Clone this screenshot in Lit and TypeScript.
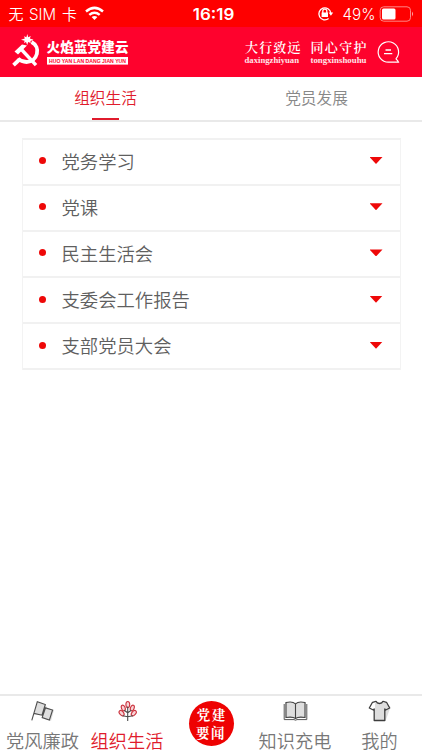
import { LitElement, html, css, svg } from "lit";
import { customElement, property } from "lit/decorators.js";

const flag = svg`<path d="M7.5 2.5 L15.8 4.8 L17 8 L24 10 L21 21 L13 18 L12 15 L4 13.8Z" fill="#dedede"/>
  <path d="M1.8 20.3 L7.3 1.8 L15.3 4.5 L12 15.2 L3.7 13.4 M14.5 7.6 L15.5 7.9 L22.6 10 L19.4 20 L12.2 17.6 L15.5 7.9" fill="none" stroke="#4d4d4d" stroke-width="1.1"/>`;

const plant = svg`<g fill="#f8d5d8" stroke="#cc3540" stroke-width="1.1">
  <ellipse cx="12.8" cy="4.6" rx="1.9" ry="3.1"/>
  <ellipse cx="8.3" cy="8" rx="1.8" ry="3" transform="rotate(-22 8.3 8)"/>
  <ellipse cx="17.3" cy="8" rx="1.8" ry="3" transform="rotate(22 17.3 8)"/>
  <ellipse cx="6.6" cy="13.2" rx="1.9" ry="3.1" transform="rotate(-42 6.6 13.2)"/>
  <ellipse cx="18.8" cy="13.2" rx="1.9" ry="3.1" transform="rotate(42 18.8 13.2)"/></g>
  <path d="M12.7 6.5V21 M9.2 10.2 L12.7 12.8 L16.3 10.2 M7.5 15.8 L12.7 16.8 L18 15.8" stroke="#4d4d4d" stroke-width="1.1" fill="none"/>`;

const book = svg`<path d="M2 2.5H23V18H2Z" fill="#dedede"/>
  <path d="M12.5 4 C10.5 1.8 6 1.8 3 2.5 V17.5 C7 16.8 10.5 17 12.5 18.5 C14.5 17 18 16.8 22 17.5 V2.5 C19 1.8 14.5 1.8 12.5 4Z V18.5" fill="none" stroke="#444" stroke-width="1.1"/>
  <path d="M1.2 4V19.6H11L12.5 20.2L14 19.6H23.8V4" fill="none" stroke="#555" stroke-width="1"/>`;

const shirt = svg`<path d="M8 3 H19 L23.5 7 L18.5 21 H8Z" fill="#dedede"/>
  <path d="M9 1.3 C10.2 4.2 14.8 4.2 16 1.3 L19.5 2.3 L22.7 8 L18.7 10 L17.8 9 V20.5 H7.2 V9 L6.3 10 L2.3 8 L5.5 2.3Z" fill="none" stroke="#3d3d3d" stroke-width="1.3" stroke-linejoin="round"/>`;

@customElement("status-bar")
class StatusBar extends LitElement {
  static styles = css`
    :host { display: block; height: 27px; background: #fe0000; }
    svg { display: block; }
    text { fill: #fff; font-family: Inter, "Noto Sans CJK SC", sans-serif; font-size: 16px; }
    .zh { font-family: "Noto Sans CJK SC", sans-serif; font-size: 15px; font-weight: 350; }
    .time { font-weight: 600; font-size: 16px; }
  `;
  render() {
    return html`<svg width="422" height="27" viewBox="0 0 422 27">
      <text class="zh" x="8.5" y="19.5">无</text>
      <text x="29" y="19.8" textLength="27" lengthAdjust="spacingAndGlyphs">SIM</text>
      <text class="zh" x="62" y="19.5">卡</text>
      <g fill="none" stroke="#fff" stroke-width="2.5">
        <path d="M86 11.5 Q94.5 4.3 103 11.5"/><path d="M89.3 14.9 Q94.5 10.7 99.7 14.9"/>
      </g>
      <path d="M91.6 17.1 Q94.5 14.9 97.4 17.1 L94.5 20Z" fill="#fff"/>
      <text class="time" x="192.8" y="19.8" textLength="41.5" lengthAdjust="spacingAndGlyphs">16:19</text>
      <g fill="none" stroke="#fff" stroke-width="1.3">
        <path d="M328.6 18.6 A6 6 0 1 1 330.8 13"/>
        <path d="M322.8 13 V11.2 A2 2 0 0 1 326.8 11.2 V13"/>
      </g>
      <path d="M321.6 12.5H328V17H321.6Z M328.6 12.5H333.2L330.9 15.8Z" fill="#fff"/>
      <text x="342.5" y="19.6" textLength="33" lengthAdjust="spacingAndGlyphs">49%</text>
      <rect x="380.2" y="6.8" width="30.3" height="14.4" rx="3.5" fill="none" stroke="#ff8585" stroke-width="1"/>
      <rect x="382" y="8.6" width="13.5" height="10.8" rx="1.5" fill="#fff"/>
      <path d="M412 11.6 Q414.2 14 412 16.4Z" fill="#ff9c9c"/>
    </svg>`;
  }
}

@customElement("brand-bar")
class BrandBar extends LitElement {
  static styles = css`
    :host { display: block; height: 50px; background: #fe022d; }
    svg { display: block; }
    .name { font: 900 13.5px "Noto Sans CJK SC", sans-serif; fill: #fff; }
    .latin { font: 700 5.6px "Liberation Sans", sans-serif; fill: #fe022d; }
    .motto { font: 600 13px "Noto Serif CJK SC", "Noto Sans CJK SC", serif; fill: #fff; }
    .pinyin { font: 700 8px "Liberation Serif", serif; fill: #ffe3e8; }
  `;
  render() {
    return html`<svg width="422" height="50" viewBox="0 27 422 50">
      <g fill="none" stroke="#fff">
        <path d="M31.5 42 C41.5 47 37.5 62 26.5 62 C22.5 62 20 60.5 18 58.5" stroke-width="3.8"/>
        <path d="M19.5 59.5 L13.5 65.2" stroke-width="3.8"/>
        <path d="M20.5 48.5 L36 65.2" stroke-width="3.4"/>
      </g>
      <path d="M14.5 51.5 L22 44.5 L27 45.5 L18 54.5Z" fill="#fff"/>
      <path d="M27.3 34 L28.2 37.3 L30.8 36 L29.8 38.6 L33.5 39.8 L30.5 41 L30.6 43 L28.2 42 L27.2 45 L26 42 L24 43 L24.6 40.8 L21 39.8 L24.8 38.6 L24 36.2 L26.4 37.3Z" fill="#fff"/>
      <text class="name" x="46.5" y="52" textLength="82">火焰蓝党建云</text>
      <rect x="47" y="57" width="81" height="7.6" fill="#fff"/>
      <text class="latin" x="49" y="62.9" textLength="77" lengthAdjust="spacingAndGlyphs">HUO YAN LAN DANG JIAN YUN</text>
      <text class="motto" x="245" y="52.2" textLength="55.5">大行致远</text>
      <text class="motto" x="310.5" y="52.2" textLength="56">同心守护</text>
      <text class="pinyin" x="244.5" y="62.8" textLength="54.5" lengthAdjust="spacingAndGlyphs">daxingzhiyuan</text>
      <text class="pinyin" x="310.5" y="62.8" textLength="56" lengthAdjust="spacingAndGlyphs">tongxinshouhu</text>
      <path d="M395.8 59 A10.2 10.2 0 1 0 388.5 62.2 H398.5 Q397.8 60.2 395.8 59" fill="none" stroke="#fff" stroke-width="1.2"/>
      <path d="M385.5 50H391 M384 53.6H392.3" stroke="#fff" stroke-width="1.3"/>
    </svg>`;
  }
}

@customElement("section-row")
class SectionRow extends LitElement {
  @property() label = "";
  static styles = css`
    :host { display: flex; align-items: center; box-sizing: border-box; height: 46.2px; padding: 0 17px 2px 16px; border-bottom: 2px solid #f1f1f1; }
    .dot { width: 7px; height: 7px; border-radius: 50%; background: #ee0808; margin-right: 16px; }
    .label { flex: 1; font-size: 18.35px; line-height: 26px; color: #5f5f5f; }
    .arrow { width: 13px; height: 7px; background: #ee0808; clip-path: polygon(0 0, 100% 0, 50% 100%); }
  `;
  render() {
    return html`<span class="dot"></span><span class="label">${this.label}</span><span class="arrow"></span>`;
  }
}

@customElement("app-root")
class AppRoot extends LitElement {
  static styles = css`
    :host { display: flex; flex-direction: column; height: 750px; width: 422px; overflow: hidden; background: #fff; font-family: "Noto Sans CJK SC", sans-serif; font-weight: 350; }
    .tabs { display: flex; box-sizing: border-box; height: 45px; border-bottom: 2px solid #e9e9e9; }
    .tab { flex: 1; display: flex; flex-direction: column; align-items: center; justify-content: space-between; font-size: 15.7px; line-height: 41px; color: #888; }
    .tab.on { color: #e01b2c; }
    .tab.on::after { content: ""; width: 27px; height: 2.4px; background: #e01b2c; }
    .list { flex: 1; }
    .rows { display: flex; flex-direction: column; margin: 15.5px 21.5px 0; border: 1.5px solid #f3f3f3; border-top: 2px solid #f1f1f1; border-bottom: 0; }
    .nav { display: grid; grid-template-columns: 85px 84px 84px 84px 85px; box-sizing: border-box; height: 56px; border-top: 2px solid #e9e9e9; }
    .item { display: flex; flex-direction: column; align-items: center; color: #777; font-size: 18.2px; line-height: 20px; padding-top: 4px; white-space: nowrap; }
    .item.on { color: #e01b2c; }
    .item svg { width: 25px; height: 22px; flex: none; margin-bottom: 8px; }
    .badge { align-self: start; justify-self: center; margin-top: 5px; width: 45px; height: 45px; border-radius: 50%; background: #ee0202; color: #fff; font: 700 13.5px/17.5px "Noto Serif CJK SC", "Noto Sans CJK SC", serif; letter-spacing: 1.5px; text-align: center; text-indent: 1.5px; padding-top: 5px; box-sizing: border-box; }
  `;
  render() {
    const rows = ["党务学习", "党课", "民主生活会", "支委会工作报告", "支部党员大会"];
    const item = (label: string, icon: unknown, on = false) => html`<div class="item ${on ? "on" : ""}">
      <svg viewBox="0 0 25 22">${icon}</svg><span>${label}</span></div>`;
    return html`
      <status-bar></status-bar>
      <brand-bar></brand-bar>
      <div class="tabs"><div class="tab on">组织生活</div><div class="tab">党员发展</div></div>
      <div class="list"><div class="rows">${rows.map((r) => html`<section-row .label=${r}></section-row>`)}</div></div>
      <div class="nav">
        ${item("党风廉政", flag)}
        ${item("组织生活", plant, true)}
        <div class="badge">党建<br>要闻</div>
        ${item("知识充电", book)}
        ${item("我的", shirt)}
      </div>`;
  }
}
